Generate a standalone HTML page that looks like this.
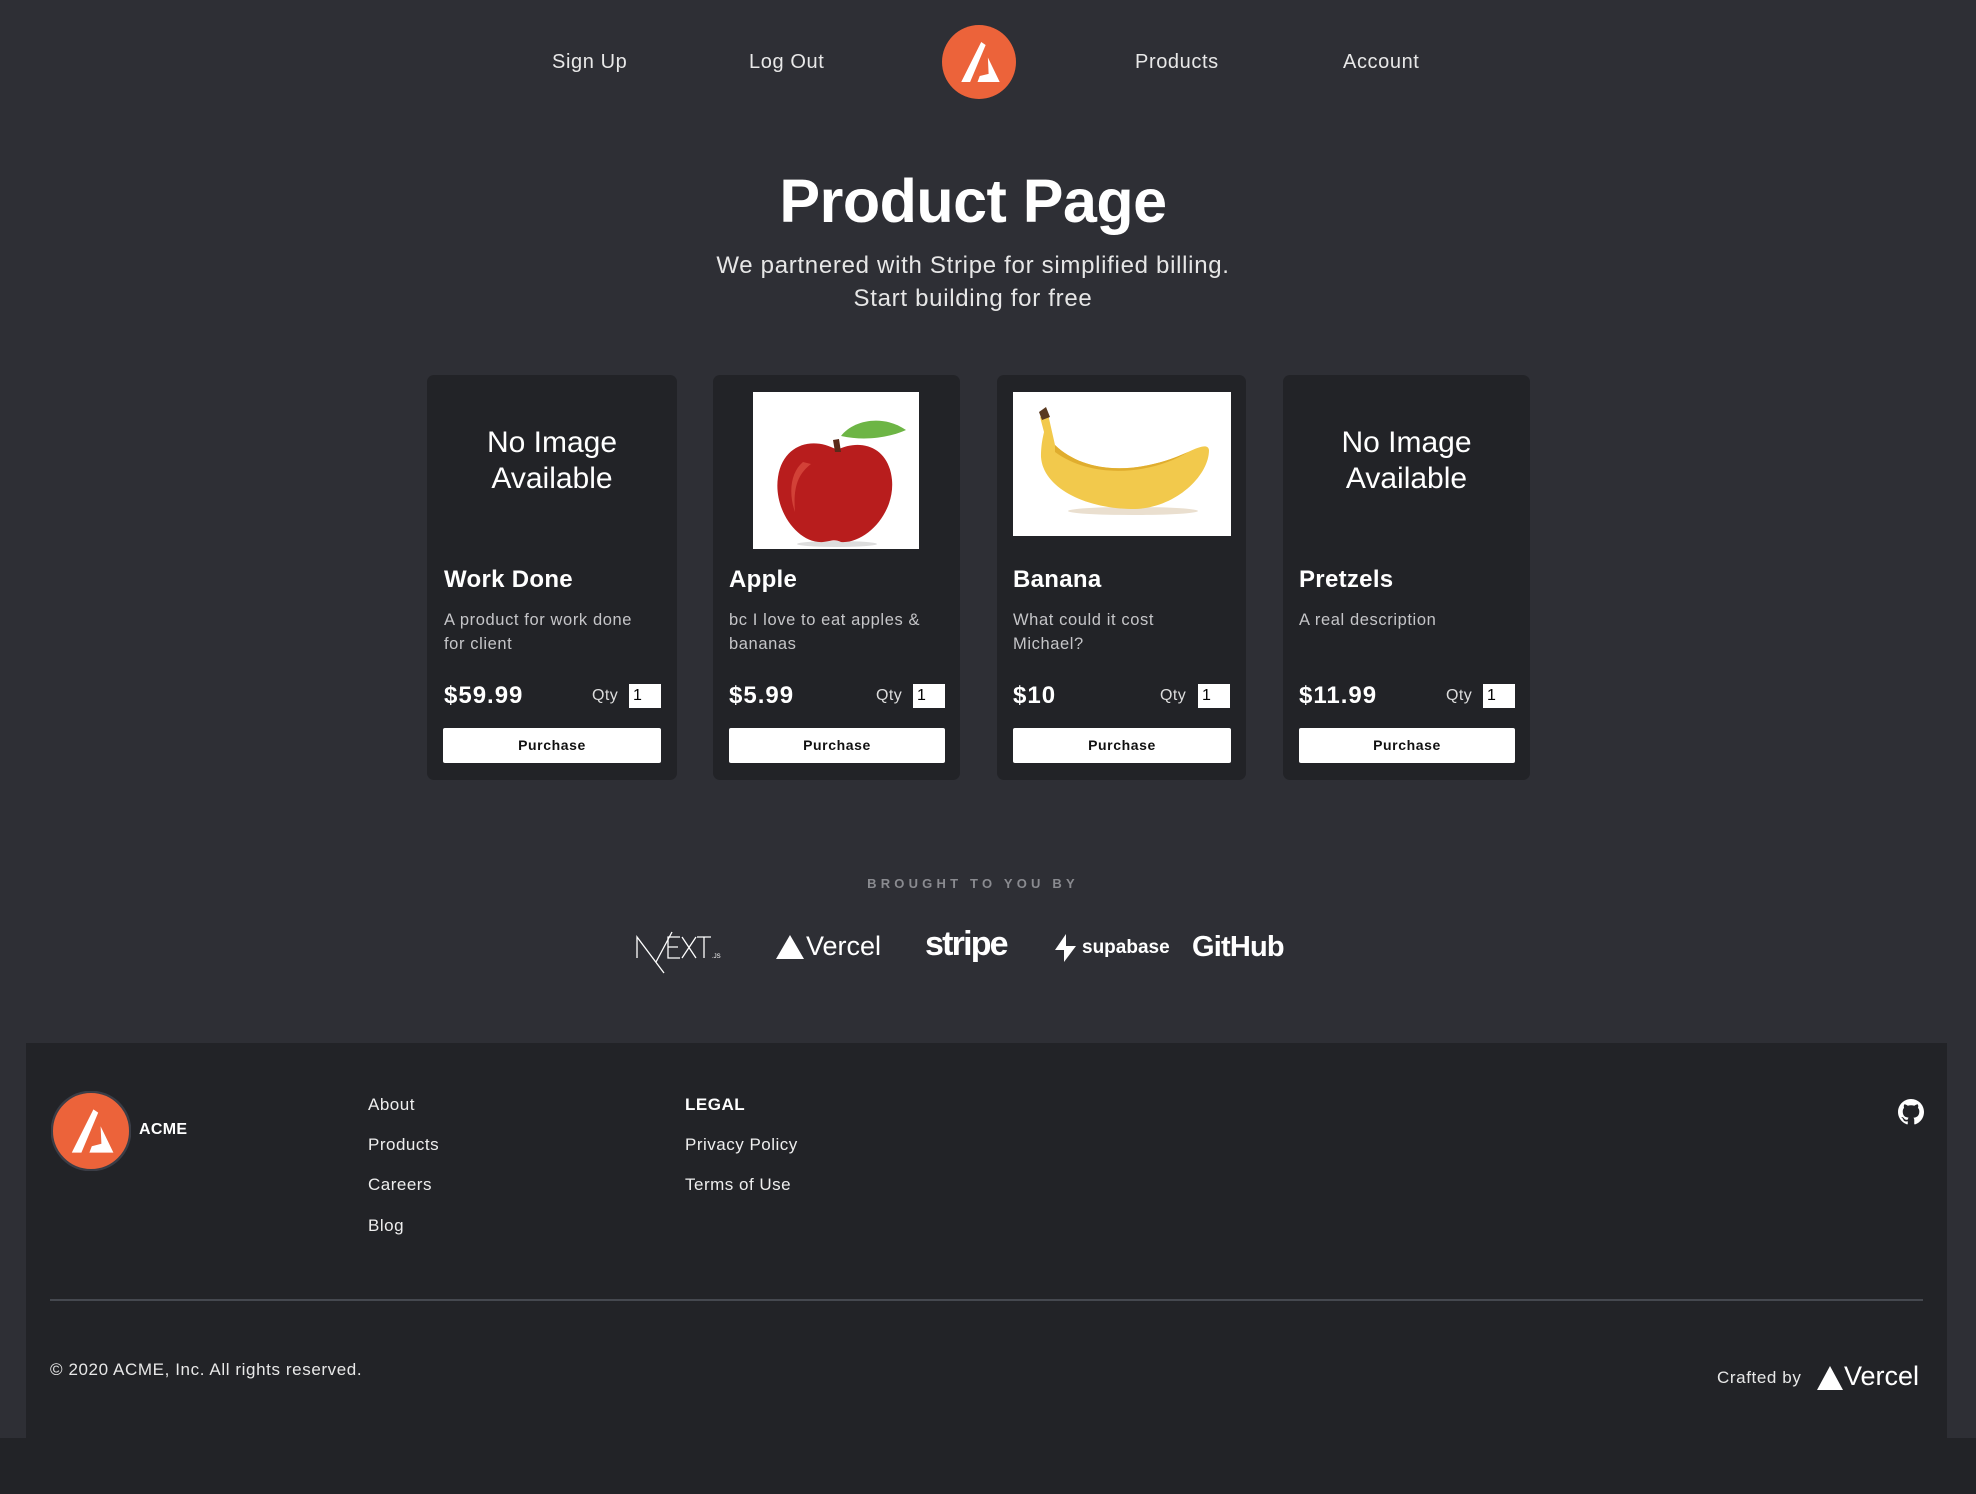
<!DOCTYPE html>
<html><head><meta charset="utf-8"><style>
*{margin:0;padding:0;box-sizing:border-box}
html,body{width:1976px;height:1494px;overflow:hidden}
body{background:#222327;font-family:"Liberation Sans",sans-serif;color:#fff;position:relative}
.top{position:absolute;left:0;top:0;width:1976px;height:1043px;background:#2e2f35}
.side{position:absolute;top:1043px;height:395px;background:#2e2f35}
.a{position:absolute;white-space:nowrap}
.nav{font-size:20px;color:#e8e8e8;top:51px;letter-spacing:.6px}
.card{position:absolute;top:375px;width:248px;height:405px;background:#222327;border-radius:7px}
.card .ni{position:absolute;left:0;right:0;top:50px;text-align:center;font-size:30px;line-height:36px;color:#fff}
.card h3{position:absolute;left:17px;top:191px;font-size:24px;font-weight:600;letter-spacing:.3px}
.card .d{position:absolute;left:17px;top:233px;font-size:16.5px;line-height:24px;color:#c5c5c8;width:205px;letter-spacing:.6px;white-space:normal}
.card .p{position:absolute;left:17px;top:307px;font-size:24px;font-weight:bold;letter-spacing:1px}
.card .q{position:absolute;left:164px;top:312px;font-size:16px;color:#ddd;letter-spacing:.4px}
.card .in{position:absolute;left:202px;top:309px;width:32px;height:24px;background:#fff;color:#000;font-size:16px;padding-left:4px;line-height:24px}
.card .b{position:absolute;left:16px;top:353px;width:218px;height:35px;background:#fff;color:#111;font-size:14px;font-weight:bold;text-align:center;line-height:35px;border-radius:2px;letter-spacing:.6px}
.fl{font-size:17px;color:#eee;letter-spacing:.5px}
</style></head><body>
<div class="top"></div>
<div class="side" style="left:0;width:26px"></div>
<div class="side" style="left:1947px;width:29px"></div>

<div class="a nav" style="left:552px">Sign Up</div>
<div class="a nav" style="left:749px">Log Out</div>
<div class="a nav" style="left:1135px">Products</div>
<div class="a nav" style="left:1343px">Account</div>
<svg class="a" style="left:942px;top:25px" width="74" height="74" viewBox="0 0 100 100">
<circle cx="50" cy="50" r="50" fill="#ec633a"/>
<polygon points="53,23 59,27 38,77 26,77" fill="#fff"/>
<polygon points="62,44 78,77 48,77 51,69 63,66" fill="#fff"/>
</svg>

<div class="a" style="left:0;width:1946px;text-align:center;top:166px;font-size:61px;font-weight:bold;letter-spacing:-0.5px">Product Page</div>
<div class="a" style="left:0;width:1946px;text-align:center;top:249px;font-size:24px;line-height:33px;color:#e6e6e6;letter-spacing:.7px">We partnered with Stripe for simplified billing.<br>Start building for free</div>

<div class="card" style="left:427px;width:250px">
<div class="ni">No Image<br>Available</div>
<h3>Work Done</h3>
<div class="d">A product for work done for client</div>
<div class="p">$59.99</div><div class="q" style="left:165px">Qty</div><div class="in">1</div>
<div class="b">Purchase</div></div>

<div class="card" style="left:713px;width:247px">
<svg style="position:absolute;left:40px;top:17px" width="166" height="157" viewBox="0 0 166 157">
<rect width="166" height="157" fill="#fff"/>
<ellipse cx="84" cy="152" rx="40" ry="3" fill="#ddd"/>
<path d="M84 58 C60 44 30 52 25 85 C20 118 45 152 70 150 C78 149 82 147 88 150 C112 152 142 122 139 88 C136 55 108 46 84 58Z" fill="#b81d1d"/>
<path d="M50 70 C38 80 35 100 42 120 C40 95 45 82 58 72Z" fill="#e25a4a" opacity=".6"/>
<path d="M82 60 L80 48 L86 47 L88 60Z" fill="#5a2a1a"/>
<path d="M88 44 C100 28 130 22 153 38 C140 44 115 50 88 44Z" fill="#6db545"/>
</svg>
<h3 style="left:16px">Apple</h3>
<div class="d" style="left:16px">bc I love to eat apples &amp; bananas</div>
<div class="p" style="left:16px">$5.99</div><div class="q" style="left:163px">Qty</div><div class="in" style="left:200px">1</div>
<div class="b" style="left:16px;width:216px">Purchase</div></div>

<div class="card" style="left:997px;width:249px">
<svg style="position:absolute;left:16px;top:17px" width="218" height="144" viewBox="0 0 218 144">
<rect width="218" height="144" fill="#fff"/>
<ellipse cx="120" cy="119" rx="65" ry="4" fill="#eadfcf"/>
<path d="M27 25 L35 22 L42 53 C70 80 120 85 175 60 C188 54 195 52 196 58 C196 85 160 118 118 117 C70 116 30 95 28 65 C28 52 30 45 31 40Z" fill="#f2c94c"/>
<path d="M42 53 C70 80 120 85 175 60 C140 82 80 88 42 60Z" fill="#e0ad2e"/>
<path d="M26 20 L33 15 L37 25 L29 28Z" fill="#5a3a20"/>
</svg>
<h3 style="left:16px">Banana</h3>
<div class="d" style="left:16px;width:185px">What could it cost Michael?</div>
<div class="p" style="left:16px">$10</div><div class="q" style="left:163px">Qty</div><div class="in" style="left:201px">1</div>
<div class="b" style="left:16px;width:218px">Purchase</div></div>

<div class="card" style="left:1283px;width:247px">
<div class="ni">No Image<br>Available</div>
<h3 style="left:16px">Pretzels</h3>
<div class="d" style="left:16px">A real description</div>
<div class="p" style="left:16px">$11.99</div><div class="q" style="left:163px">Qty</div><div class="in" style="left:200px">1</div>
<div class="b" style="left:16px;width:216px">Purchase</div></div>

<div class="a" style="left:0;width:1946px;text-align:center;top:876px;font-size:13px;letter-spacing:4.2px;color:#8a8b90;font-weight:bold">BROUGHT TO YOU BY</div>

<svg class="a" style="left:634px;top:930px" width="90" height="45" viewBox="0 0 90 45">
<g stroke="#fff" stroke-width="1.3" fill="none">
<path d="M3 28 V7 L30 43"/><path d="M22 32 L38 2"/>
<path d="M46 7 H34 V28 H46 M34 17 H44"/>
<path d="M48 7 L62 28 M62 7 L48 28"/>
<path d="M63 7 H77 M70 7 V28"/>
</g>
<text x="78" y="28" font-size="6" fill="#fff" font-family="Liberation Sans">.JS</text>
</svg>
<svg class="a" style="left:776px;top:934px" width="28" height="26"><polygon points="14,1 28,25 0,25" fill="#fff"/></svg>
<div class="a" style="left:806px;top:931px;font-size:27px;letter-spacing:0px">Vercel</div>
<div class="a" style="left:925px;top:925px;font-size:34px;font-weight:bold;letter-spacing:-1.8px">stripe</div>
<svg class="a" style="left:1055px;top:934px" width="22" height="28" viewBox="0 0 22 28"><polygon points="11,0 11,12 21,12 9,28 9,16 0,16" fill="#fff"/></svg>
<div class="a" style="left:1082px;top:937px;font-size:19px;font-weight:bold;letter-spacing:0px">supabase</div>
<div class="a" style="left:1192px;top:931px;font-size:29px;font-weight:bold;letter-spacing:-.8px">GitHub</div>

<svg class="a" style="left:51px;top:1091px" width="80" height="80" viewBox="0 0 100 100">
<circle cx="50" cy="50" r="49" fill="#ec633a" stroke="#3a3d46" stroke-width="3"/>
<polygon points="53,23 59,27 38,77 26,77" fill="#fff"/>
<polygon points="62,44 78,77 48,77 51,69 63,66" fill="#fff"/>
</svg>
<div class="a" style="left:139px;top:1121px;font-size:16px;font-weight:bold;letter-spacing:.3px">ACME</div>

<div class="a fl" style="left:368px;top:1095px">About</div>
<div class="a fl" style="left:368px;top:1135px">Products</div>
<div class="a fl" style="left:368px;top:1175px">Careers</div>
<div class="a fl" style="left:368px;top:1216px">Blog</div>
<div class="a fl" style="left:685px;top:1095px;font-weight:bold;color:#fff">LEGAL</div>
<div class="a fl" style="left:685px;top:1135px">Privacy Policy</div>
<div class="a fl" style="left:685px;top:1175px">Terms of Use</div>

<svg class="a" style="left:1898px;top:1099px" width="26" height="26" viewBox="0 0 16 16"><path fill="#fff" d="M8 0C3.58 0 0 3.58 0 8c0 3.540 2.29 6.530 5.470 7.590.4.07.55-.17.55-.38 0-.19-.01-.82-.01-1.490-2.010.37-2.530-.49-2.690-.94-.09-.23-.48-.94-.82-1.130-.28-.15-.68-.52-.01-.53.63-.01 1.080.58 1.230.82.72 1.210 1.870.87 2.330.66.07-.52.28-.87.51-1.070-1.780-.2-3.640-.89-3.640-3.950 0-.87.31-1.590.82-2.150-.08-.2-.36-1.020.08-2.120 0 0 .67-.21 2.200.82.64-.18 1.320-.27 2-.27.68 0 1.360.09 2 .27 1.530-1.040 2.200-.82 2.200-.82.44 1.100.16 1.920.08 2.120.51.56.82 1.270.82 2.150 0 3.070-1.870 3.750-3.650 3.950.29.25.54.73.54 1.480 0 1.070-.01 1.930-.01 2.200 0 .21.15.46.55.38A8.013 8.013 0 0016 8c0-4.420-3.580-8-8-8z"/></svg>

<div class="a" style="left:50px;top:1299px;width:1873px;height:2px;background:#45484f"></div>
<div class="a" style="left:50px;top:1360px;font-size:17px;color:#e8e8e8;letter-spacing:.6px">© 2020 ACME, Inc. All rights reserved.</div>
<div class="a" style="left:1717px;top:1368px;font-size:17px;color:#e8e8e8;letter-spacing:.6px">Crafted by</div>
<svg class="a" style="left:1817px;top:1366px" width="26" height="24"><polygon points="13,0 26,24 0,24" fill="#fff"/></svg>
<div class="a" style="left:1844px;top:1361px;font-size:27px;letter-spacing:0px">Vercel</div>
</body></html>
